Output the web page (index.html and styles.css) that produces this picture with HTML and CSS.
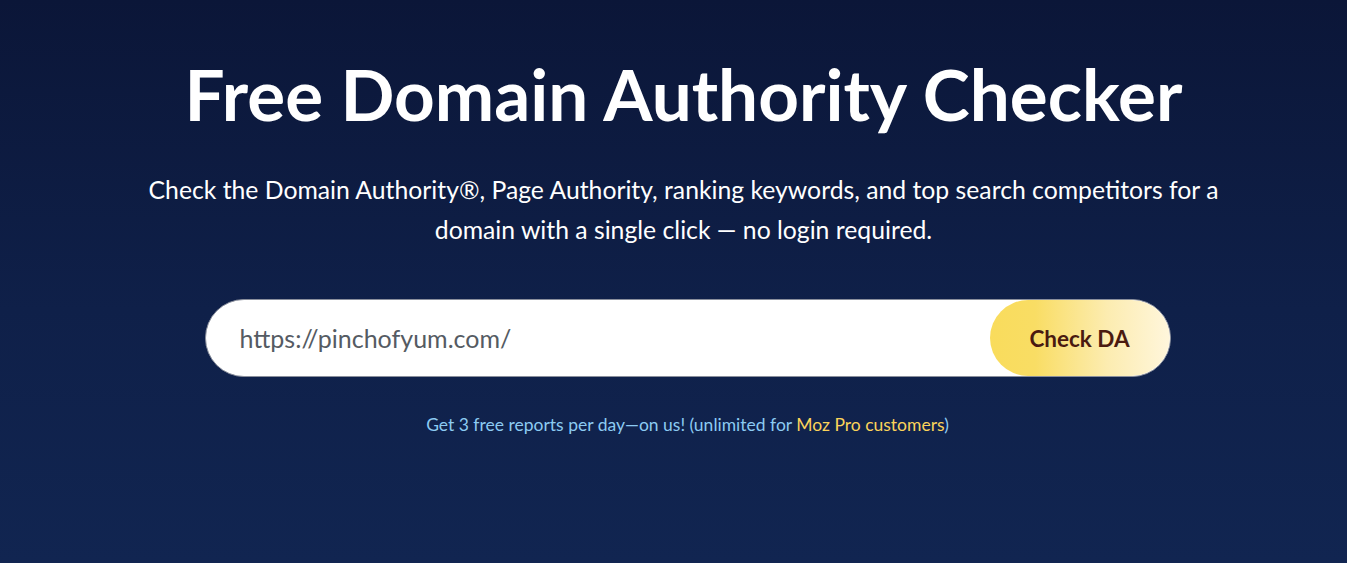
FILE: index.html
```html
<!DOCTYPE html>
<html lang="en">
<head>
<meta charset="utf-8">
<title>Free Domain Authority Checker</title>
<link rel="stylesheet" href="styles.css">
</head>
<body>
<main class="hero">
  <h1 class="title">Free Domain Authority Checker</h1>
  <p class="lead">Check the Domain Authority®, Page Authority, ranking keywords, and top search competitors for a domain with a single click — no login required.</p>
  <form class="search">
    <input class="search-input" type="text" value="https://pinchofyum.com/">
    <button class="search-btn" type="button">Check DA</button>
  </form>
  <p class="note">Get 3 free reports per day—on us! (unlimited for <a class="note-link" href="#">Moz Pro customers</a>)</p>
</main>
</body>
</html>
```

FILE: styles.css
```css
* { box-sizing: border-box; }
html, body { margin: 0; height: 100%; }
body {
  background: linear-gradient(180deg, #0b1638 0%, #0f2049 55%, #112551 100%);
  font-family: Lato, "Open Sans", sans-serif;
  color: #fff;
  overflow: hidden;
}
.hero {
  display: flex;
  flex-direction: column;
  align-items: center;
  padding-top: 49px;
  padding-left: 20px;
}
.title {
  margin: 0;
  font-size: 71px;
  font-weight: 700;
  line-height: 90px;
  letter-spacing: 0;
}
.lead {
  margin: 31px 0 0;
  width: 1100px;
  text-align: center;
  font-size: 24.75px;
  line-height: 40px;
}
.search {
  margin: 49px 0 0 8px;
  width: 966px;
  height: 78px;
  display: flex;
  background: #fff;
  border: 1px solid #8a8f9c;
  border-radius: 39px;
  overflow: hidden;
}
.search-input {
  flex: 1;
  border: 0;
  outline: 0;
  background: transparent;
  padding: 0 0 0 34px;
  font-family: Lato, sans-serif;
  font-size: 25px;
  color: #555b63;
}
.search-btn {
  width: 180px;
  height: 100%;
  border: 0;
  border-radius: 39px;
  background: linear-gradient(90deg, #f9dc5c 0%, #f9dd64 25%, #fcecb0 65%, #fff6dc 100%);
  font-family: Lato, sans-serif;
  font-weight: 700;
  font-size: 22.5px;
  color: #4a1a10;
  padding: 0;
}
.note {
  margin: 37px 0 0 8px;
  font-size: 17.5px;
  color: #8ccbf2;
}
.note-link {
  color: #fbd35a;
  text-decoration: none;
}
```
